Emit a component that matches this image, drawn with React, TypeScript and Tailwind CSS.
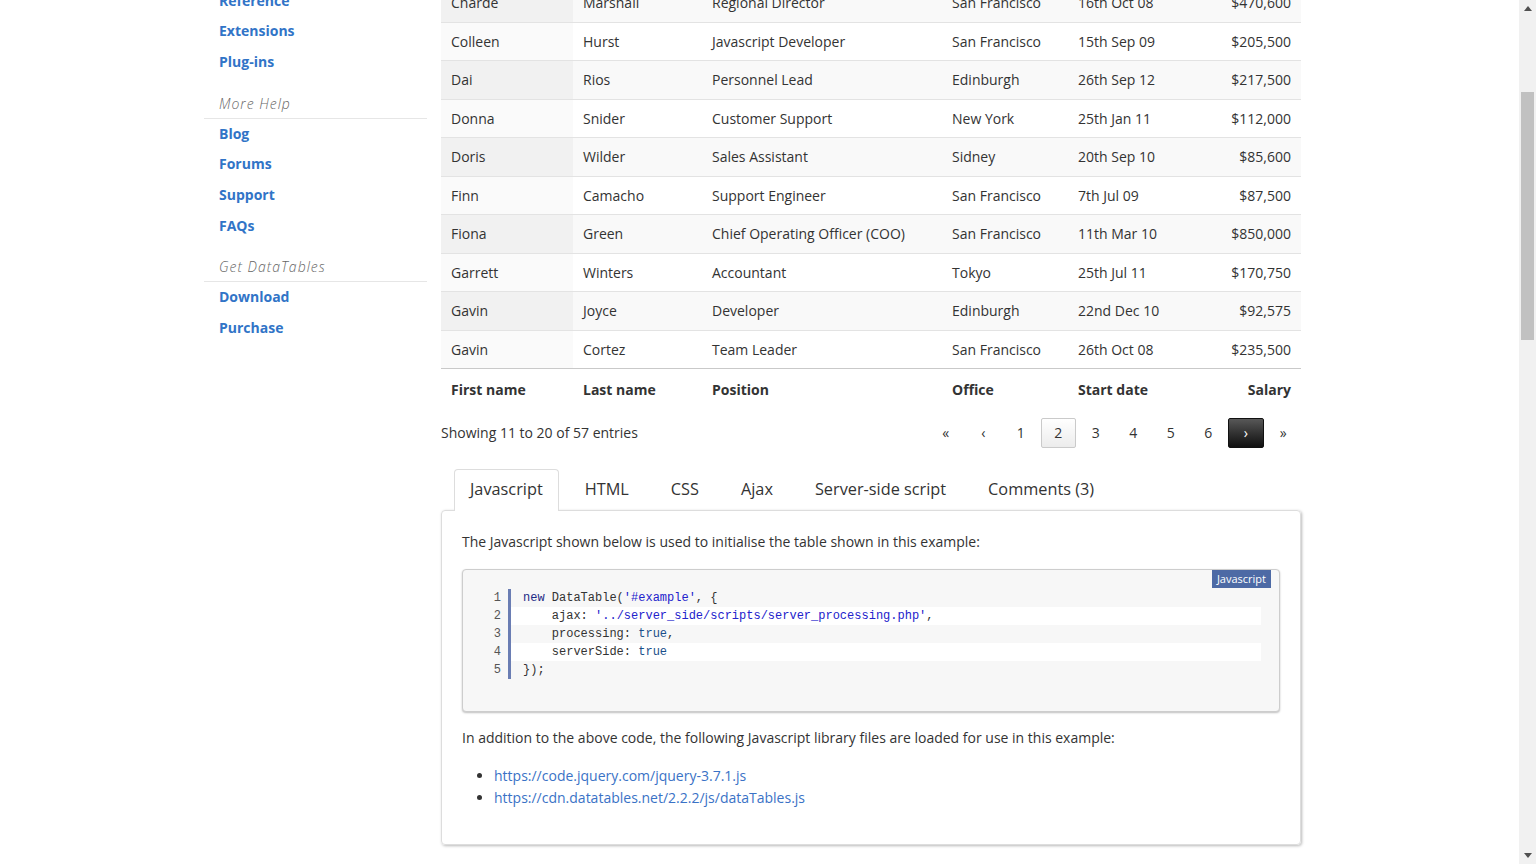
import React from "react";

const rows = [
  ["Charde", "Marshall", "Regional Director", "San Francisco", "16th Oct 08", "$470,600"],
  ["Colleen", "Hurst", "Javascript Developer", "San Francisco", "15th Sep 09", "$205,500"],
  ["Dai", "Rios", "Personnel Lead", "Edinburgh", "26th Sep 12", "$217,500"],
  ["Donna", "Snider", "Customer Support", "New York", "25th Jan 11", "$112,000"],
  ["Doris", "Wilder", "Sales Assistant", "Sidney", "20th Sep 10", "$85,600"],
  ["Finn", "Camacho", "Support Engineer", "San Francisco", "7th Jul 09", "$87,500"],
  ["Fiona", "Green", "Chief Operating Officer (COO)", "San Francisco", "11th Mar 10", "$850,000"],
  ["Garrett", "Winters", "Accountant", "Tokyo", "25th Jul 11", "$170,750"],
  ["Gavin", "Joyce", "Developer", "Edinburgh", "22nd Dec 10", "$92,575"],
  ["Gavin", "Cortez", "Team Leader", "San Francisco", "26th Oct 08", "$235,500"],
];

const cols = "grid grid-cols-[132px_129px_240px_126px_112px_121px]";

function SideLink({ label }: { label: string }) {
  return (
    <a href="#" className="block h-[30.7px] pl-[15px] leading-[30.7px] font-bold text-[#3174c7]">
      {label}
    </a>
  );
}

function SideHeader({ label }: { label: string }) {
  return (
    <div className="pt-[15px] pb-[4px] pl-[15px] leading-[21px] border-b border-[#e6e6e6] italic font-light tracking-[1px] text-[#666]">
      {label}
    </div>
  );
}

function PageButton({ label, state }: { label: string; state?: "current" | "hover" }) {
  let cls = "text-[#333] border border-transparent";
  if (state === "current") cls = "text-[#333] border border-[#cacaca] bg-gradient-to-b from-white to-[#ececec]";
  if (state === "hover") cls = "text-white border border-[#111] bg-gradient-to-b from-[#585858] to-[#111]";
  return (
    <span className={`flex h-[30px] w-[35.5px] items-center justify-center rounded-[2px] ${cls}`}>{label}</span>
  );
}

const codeLines: React.ReactNode[] = [
  <>
    <span className="text-[#1c2a86]">new</span> DataTable(<span className="text-[#2222cc]">'#example'</span>, {"{"}
  </>,
  <>
    {"    "}ajax: <span className="text-[#2222cc]">'../server_side/scripts/server_processing.php'</span>,
  </>,
  <>
    {"    "}processing: <span className="text-[#1a4f8a]">true</span>,
  </>,
  <>
    {"    "}serverSide: <span className="text-[#1a4f8a]">true</span>
  </>,
  <>{"});"}</>,
];

export default function App() {
  return (
    <div
      className="flex h-[864px] overflow-hidden bg-white text-[14px] text-[#333]"
      style={{ fontFamily: '"Open Sans", "Noto Sans", sans-serif' }}
    >
      <div className="flex-1 overflow-hidden">
        <div className="flex pl-[204px]">
          {/* sidebar */}
          <aside className="-mt-[14.5px] w-[223px]">
            <SideLink label="Reference" />
            <SideLink label="Extensions" />
            <SideLink label="Plug-ins" />
            <SideHeader label="More Help" />
            <SideLink label="Blog" />
            <SideLink label="Forums" />
            <SideLink label="Support" />
            <SideLink label="FAQs" />
            <SideHeader label="Get DataTables" />
            <SideLink label="Download" />
            <SideLink label="Purchase" />
          </aside>

          {/* main */}
          <main className="-mt-[15.8px] ml-[14px] w-[860px]">
            <div>
              {rows.map((r, i) => {
                const stripe = i % 2 === 0;
                const last = i === rows.length - 1;
                return (
                  <div
                    key={i}
                    className={`${cols} border-b ${last ? "border-[#c9c9c9]" : "border-[#e3e3e3]"} ${stripe ? "bg-[#f9f9f9]" : "bg-white"}`}
                  >
                    {r.map((c, j) => (
                      <div
                        key={j}
                        className={`px-[10px] py-[8px] leading-[21.5px] whitespace-nowrap ${j === 5 ? "text-right" : ""} ${j === 0 ? (stripe ? "bg-[#f1f1f1]" : "bg-[#fafafa]") : ""}`}
                      >
                        {c}
                      </div>
                    ))}
                  </div>
                );
              })}
              <div className={`${cols} font-bold`}>
                {["First name", "Last name", "Position", "Office", "Start date", "Salary"].map((h, j) => (
                  <div key={h} className={`px-[10px] pt-[9.5px] pb-[10.5px] leading-[21.5px] whitespace-nowrap ${j === 5 ? "text-right" : ""}`}>
                    {h}
                  </div>
                ))}
              </div>
            </div>

            <div className="mt-[7px] flex h-[30px] items-center justify-between">
              <span>Showing 11 to 20 of 57 entries</span>
              <div className="flex gap-[2px]">
                <PageButton label="«" />
                <PageButton label="‹" />
                <PageButton label="1" />
                <PageButton label="2" state="current" />
                <PageButton label="3" />
                <PageButton label="4" />
                <PageButton label="5" />
                <PageButton label="6" />
                <PageButton label="›" state="hover" />
                <PageButton label="»" />
              </div>
            </div>

            {/* tabs */}
            <div className="mt-[21px] flex gap-[10px] pl-[13px] text-[16.3px] leading-[27px]">
              <div className="relative z-10 -mb-px rounded-t-[4px] border border-b-0 border-[#ddd] bg-white px-[15px] pt-[6.5px] pb-[7.5px]">
                Javascript
              </div>
              {["HTML", "CSS", "Ajax", "Server-side script", "Comments (3)"].map((t) => (
                <div key={t} className="px-[16px] pt-[7.5px] pb-[6.5px]">
                  {t}
                </div>
              ))}
            </div>

            <div className="rounded-[4px] border border-[#ddd] px-[20px] pt-[20px] pb-[35px] shadow-[1px_1px_3px_rgba(0,0,0,0.28)]">
              <p className="leading-[22px]">The Javascript shown below is used to initialise the table shown in this example:</p>

              <div className="relative mt-[16px] rounded-[4px] border border-[#cdcdcd] bg-[#f7f7f7] pt-[19px] pb-[32px] shadow-[0_1px_2px_rgba(0,0,0,0.25)]">
                <span className="absolute top-0 right-[8px] bg-[#4d6aa5] px-[5px] text-[11px] leading-[18px] text-white">
                  Javascript
                </span>
                {codeLines.map((line, i) => (
                  <div
                    key={i}
                    className="flex text-[12px] leading-[18px]"
                    style={{ fontFamily: '"Liberation Mono", "DejaVu Sans Mono", monospace' }}
                  >
                    <span className="w-[39px] pr-[1px] text-right text-[#555]">{i + 1}</span>
                    <span className="w-[6px]" />
                    <span
                      className={`mr-[18px] flex-1 whitespace-pre border-l-[3px] border-[#6a7db3] pl-[12px] ${i % 2 === 1 ? "bg-white" : ""}`}
                    >
                      {line}
                    </span>
                  </div>
                ))}
              </div>

              <p className="mt-[15px] leading-[22px]">
                In addition to the above code, the following Javascript library files are loaded for use in this example:
              </p>
              <ul className="mt-[16px] list-disc pl-[32px] leading-[22px]">
                <li>
                  <a href="#" className="text-[#3a72c6]">https://code.jquery.com/jquery-3.7.1.js</a>
                </li>
                <li>
                  <a href="#" className="text-[#3a72c6]">https://cdn.datatables.net/2.2.2/js/dataTables.js</a>
                </li>
              </ul>
            </div>
          </main>
        </div>
      </div>

      {/* scrollbar */}
      <div className="flex w-[17px] flex-col bg-[#f1f1f1]">
        <div className="flex h-[17px] items-center justify-center">
          <svg width="8" height="5" viewBox="0 0 8 5">
            <path d="M0 5 L4 0 L8 5 Z" fill="#505050" />
          </svg>
        </div>
        <div className="h-[75px]" />
        <div className="mx-[2px] h-[248px] bg-[#c1c1c1]" />
        <div className="flex-1" />
        <div className="flex h-[17px] items-center justify-center">
          <svg width="8" height="5" viewBox="0 0 8 5">
            <path d="M0 0 L4 5 L8 0 Z" fill="#505050" />
          </svg>
        </div>
      </div>
    </div>
  );
}
